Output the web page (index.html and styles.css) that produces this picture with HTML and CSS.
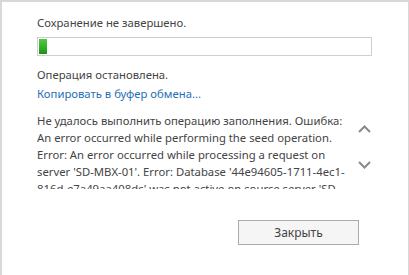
FILE: index.html
```html
<!DOCTYPE html>
<html lang="ru">
<head>
    <meta charset="UTF-8">
    <title>Сохранение не завершено</title>
    <link rel="stylesheet" href="styles.css">
</head>
<body>
    <div class="dialog">
        <p class="title">Сохранение не завершено.</p>
        <div class="progress">
            <div class="progress-fill" style="width: 8px;"></div>
        </div>
        <p class="status">Операция остановлена.</p>
        <a href="#" class="copy-link">Копировать в буфер обмена...</a>

        <div class="details">
            <div class="details-text">
                Не удалось выполнить операцию заполнения. Ошибка: An error occurred while performing the seed operation. Error: An error occurred while processing a request on server 'SD-MBX-01'. Error: Database '44e94605-1711-4ec1-<wbr>816d-e7a49aa408dc' was not active on source server 'SD-<wbr>MBX-01'.
            </div>
            <div class="scroll-arrows">
                <svg width="13" height="8" viewBox="0 0 13 8"><path d="M1 7 L6.5 1.5 L12 7" fill="none" stroke="#8a8a8a" stroke-width="2"/></svg>
                <svg width="13" height="8" viewBox="0 0 13 8"><path d="M1 1 L6.5 6.5 L12 1" fill="none" stroke="#8a8a8a" stroke-width="2"/></svg>
            </div>
        </div>

        <div class="actions">
            <button class="btn">Закрыть</button>
        </div>
    </div>
</body>
</html>
```

FILE: styles.css
```css
body {
    margin: 0;
    font-family: 'Noto Sans', 'Open Sans', sans-serif;
    font-size: 11.3px;
    color: #444;
    background: #fff;
}
.dialog {
    box-sizing: border-box;
    width: 409px;
    height: 275px;
    border-top: 2px solid #d8d8d8;
    border-left: 2px solid #d8d8d8;
    border-right: 1px solid #d8d8d8;
    padding: 12px 0 0 35px;
    overflow: hidden;
}
.title,
.status {
    margin: 0;
    line-height: 17px;
}
.progress {
    box-sizing: border-box;
    width: 335px;
    height: 19px;
    margin: 6px 0 10px;
    border: 1px solid #cfcfcf;
    padding: 1px;
    background: #fff;
}
.progress-fill {
    height: 100%;
    background: linear-gradient(to bottom, #52c94a 0%, #2eae27 60%, #1f8f1b 100%);
}
.copy-link {
    display: block;
    margin-top: 2px;
    line-height: 17px;
    color: #1f6fb5;
    text-decoration: none;
}
.details {
    display: flex;
    height: 82px;
    margin-top: 10px;
}
.details-text {
    width: 314px;
    height: 77px;
    overflow: hidden;
    line-height: 17px;
}
.scroll-arrows {
    display: flex;
    flex-direction: column;
    justify-content: space-between;
    height: 44px;
    margin: 13px 0 0 7px;
}
.actions {
    display: flex;
    justify-content: flex-end;
    width: 322px;
    margin-top: 26px;
}
.btn {
    width: 121px;
    height: 25px;
    border: 1px solid #ababab;
    background: #f5f5f5;
    font-family: inherit;
    font-size: 12px;
    color: #444;
}
```
